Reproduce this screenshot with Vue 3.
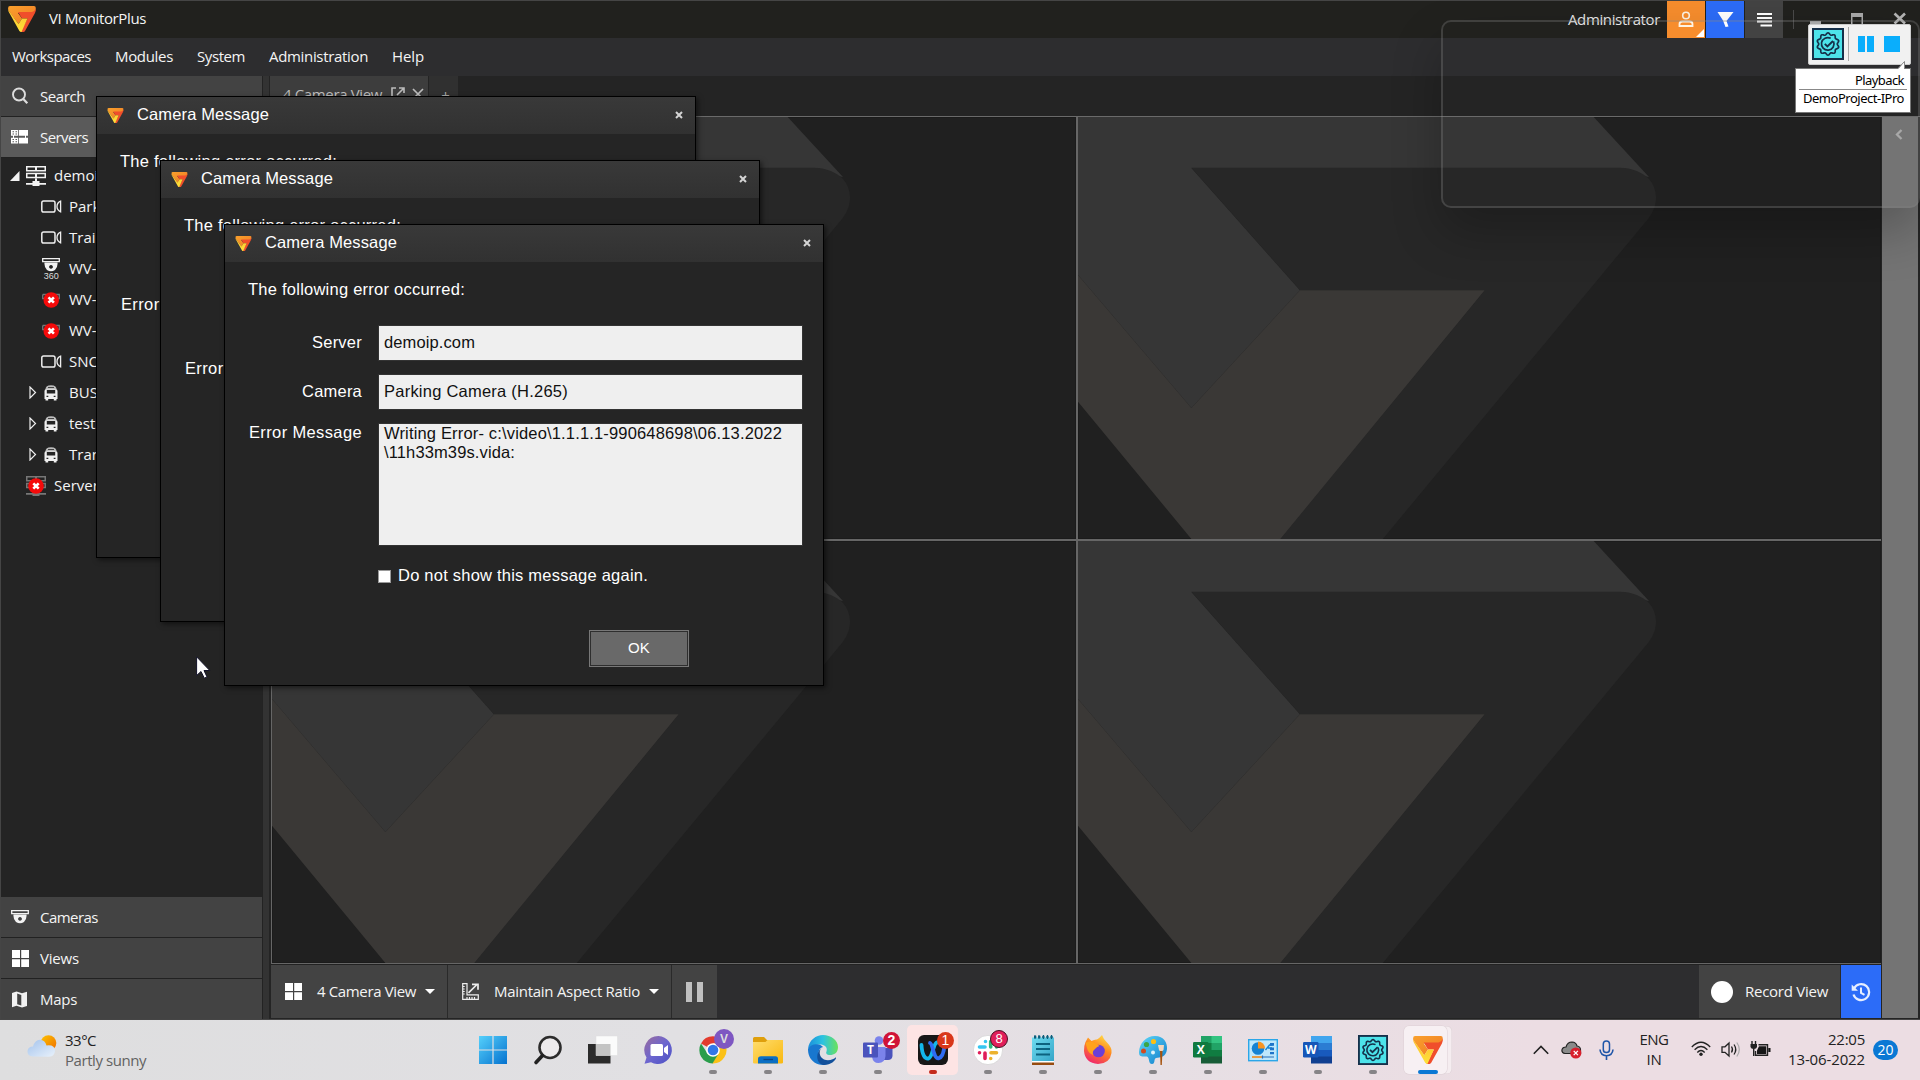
<script setup>
const menus = [
  ['Workspaces', 78],
  ['Modules', 57],
  ['System', 47],
  ['Administration', 98],
  ['Help', 31]
]

const tree = [
  { label: 'demoip', kind: 'server', level: 0, arrow: 'open' },
  { label: 'Parking', kind: 'cam', level: 1 },
  { label: 'Train', kind: 'cam', level: 1 },
  { label: 'WV-', kind: 'dome360', level: 1 },
  { label: 'WV-', kind: 'domeoff', level: 1 },
  { label: 'WV-', kind: 'domeoff', level: 1 },
  { label: 'SNC', kind: 'cam', level: 1 },
  { label: 'BUS', kind: 'bus', level: 1, arrow: 'closed' },
  { label: 'testb', kind: 'bus', level: 1, arrow: 'closed' },
  { label: 'Trans', kind: 'bus', level: 1, arrow: 'closed' },
  { label: 'Server', kind: 'serveroff', level: 0 }
]

const dialogs = [96, 160, 224]

// Spreads a label's letters so that it fills the given width.
const vFit = {
  mounted(el, binding) {
    const natural = el.getBoundingClientRect().width
    const n = el.textContent.trim().length
    el.style.letterSpacing = `${((binding.value + 1 - natural) / n).toFixed(3)}px`
  }
}

// Outline of the scalloped badge around the check mark.
const gear = (() => {
  const pts = []
  for (let i = 0; i < 120; i++) {
    const a = (i / 120) * Math.PI * 2
    const r = 10.2 + 0.95 * Math.cos(10 * a)
    pts.push(`${(16 + r * Math.sin(a)).toFixed(2)} ${(16 - r * Math.cos(a)).toFixed(2)}`)
  }
  return `M${pts.join('L')}Z`
})()
</script>

<template>
  <div class="screen">
    <svg class="defs" width="0" height="0">
      <defs>
        <linearGradient id="gOr" x1="0" y1="0" x2="1" y2="1"><stop offset="0" stop-color="#f9a12c" /><stop offset="1" stop-color="#f07a26" /></linearGradient>
        <linearGradient id="gYe" x1="0" y1="0" x2="0" y2="1"><stop offset="0" stop-color="#fdc02d" /><stop offset="1" stop-color="#fee23a" /></linearGradient>
        <linearGradient id="gWin" x1="0" y1="0" x2="1" y2="1"><stop offset="0" stop-color="#55d0fb" /><stop offset="1" stop-color="#0572cf" /></linearGradient>
        <linearGradient id="gChat" x1="0" y1="0" x2="1" y2="1"><stop offset="0" stop-color="#9a6b9c" /><stop offset=".5" stop-color="#6d66cf" /><stop offset="1" stop-color="#4b50c4" /></linearGradient>
        <linearGradient id="gFold" x1="0" y1="0" x2="1" y2="1"><stop offset="0" stop-color="#ffdd6e" /><stop offset="1" stop-color="#f9b80f" /></linearGradient>
        <linearGradient id="gEdge" x1="0" y1="0" x2="1" y2="0"><stop offset="0" stop-color="#1b8fdb" /><stop offset=".5" stop-color="#2cc3e0" /><stop offset="1" stop-color="#6be25a" /></linearGradient>
        <linearGradient id="gFox" x1=".8" y1="0" x2=".3" y2="1"><stop offset="0" stop-color="#ffe14a" /><stop offset=".45" stop-color="#ff8a1e" /><stop offset="1" stop-color="#f0246e" /></linearGradient>
        <linearGradient id="gNote" x1="0" y1="0" x2="1" y2="1"><stop offset="0" stop-color="#6fdcf0" /><stop offset="1" stop-color="#35a5c8" /></linearGradient>
        <linearGradient id="gPal" x1="0" y1="0" x2="1" y2="1"><stop offset="0" stop-color="#5ed8f8" /><stop offset="1" stop-color="#0f7ccb" /></linearGradient>
        <linearGradient id="gSun" x1="0" y1="0" x2="1" y2="1"><stop offset="0" stop-color="#fdc400" /><stop offset="1" stop-color="#ef6c00" /></linearGradient>
        <linearGradient id="gCloud" x1="0" y1="0" x2="1" y2="1"><stop offset="0" stop-color="#a4c3ec" /><stop offset="1" stop-color="#e8f1fb" /></linearGradient>
      </defs>
      <symbol id="logo" viewBox="0 0 28 26">
        <path fill="url(#gOr)" d="M2 0H26Q28.500 0 27.500 4L26 7H10L14 12.500 10.500 18 .3 4Q-.6 0 2 0Z" />
        <path fill="#f04e2b" d="M10 6H24Q27 5 27.800 2.500 28 5 27 7L17 25Q16.400 26 15.500 26H12.500L19.500 12.500H14Z" />
        <path fill="url(#gYe)" d="M.2 3.500L10.500 18 14 12.500H19.500L13.500 26Q12 26 11.400 25L.5 5.500Z" />
      </symbol>
      <symbol id="cell" viewBox="0 0 803 422">
        <path fill="#363636" d="M0 0H515.700L571 60 545 55 113.400 51 222 173.300 113.400 291 0 158Z" />
        <path fill="#272727" d="M113.400 50.700H542C556 51 565 56 571 62 580 72 581 88 570 102L304.800 422H202L406.700 173.300H222Z" />
        <path fill="#3a3836" d="M0 158L113.400 291 222 173.300H406.700L202.300 422H113.400L0 284.700Z" />
      </symbol>
      <symbol id="badge" viewBox="0 0 32 32">
        <rect x="1" y="1" width="30" height="30" fill="#4de3ea" stroke="#15304a" stroke-width="2" />
        <path :d="gear" fill="none" stroke="#15304a" stroke-width="1.700" />
        <path d="M21.500 13.300A6.300 6.300 0 1 1 18.700 10.300" fill="none" stroke="#15304a" stroke-width="1.700" />
        <path d="M12.800 15.800l2.600 2.600 5.600-5.400" fill="none" stroke="#15304a" stroke-width="1.900" />
      </symbol>
      <symbol id="dome" viewBox="0 0 18 14">
        <path fill="none" stroke="#f2f2f2" stroke-width="1.300" d="M.7.700H17.300V3.600H.7Z" />
        <path fill="#f2f2f2" fill-rule="evenodd" d="M2.500 4.500H15.500A6.500 8 0 0 1 13 12Q9 14.600 5 12A6.500 8 0 0 1 2.500 4.500ZM9 7a1.900 1.900 0 1 0 .01 0Z" />
      </symbol>
      <symbol id="red" viewBox="0 0 16 16">
        <circle cx="8" cy="8" r="7.800" fill="#f50a0a" />
        <path d="M5.300 5.300l5.400 5.400M10.700 5.300l-5.400 5.400" stroke="#fff" stroke-width="2.600" />
      </symbol>
      <symbol id="four" viewBox="0 0 17 17">
        <path fill="#fff" d="M0 0H8V8H0ZM9.200 0H17V8H9.200ZM0 9.200H8V17H0ZM9.200 9.200H17V17H9.200Z" />
      </symbol>
    </svg>

    <div class="window">
      <header class="titlebar">
        <svg class="app-logo" width="28" height="26"><use href="#logo" /></svg>
        <span v-fit="96" class="app-name">VI MonitorPlus</span>
        <div class="title-right">
          <span v-fit="91" class="admin">Administrator</span>
          <div class="tbtn orange">
            <svg width="38" height="37" viewBox="0 0 38 37"><circle cx="19" cy="14.500" r="3.300" fill="none" stroke="#fff3e3" stroke-width="1.600" /><path d="M12.500 25v-2q0-2.500 3-2.500h7q3 0 3 2.500v2Z" fill="none" stroke="#fff3e3" stroke-width="1.800" /><path d="M37 28v8h-8Z" fill="#fff" /></svg>
          </div>
          <div class="tbtn blue">
            <svg width="38" height="37" viewBox="0 0 38 37"><path fill="#fff" d="M11.500 11H27.500L20.500 20 22.500 25.500 19.500 26 17 19.500Z" /></svg>
          </div>
          <div class="tbtn gray">
            <svg width="38" height="37" viewBox="0 0 38 37"><path stroke="#fff" stroke-width="1.800" d="M12 13h15M12 17h15M12 20.500h15M15.500 24.500h11.500" /></svg>
          </div>
          <i class="vline"></i>
          <svg class="wctl" width="100" height="37" viewBox="0 0 100 37">
            <path fill="#a9a9a9" d="M0 20h11v4H0ZM41 12h12v13h-12ZM42.500 16v8h9v-8Z" fill-rule="evenodd" />
            <path d="M84.500 12.500l10.500 10M95 12.500l-10.500 10" stroke="#b4b4b4" stroke-width="2.600" />
          </svg>
        </div>
      </header>

      <nav class="menubar">
        <span v-for="m in menus" :key="m[0]" v-fit="m[1]">{{ m[0] }}</span>
      </nav>

      <div class="body">
        <aside class="sidebar">
          <div class="side-row">
            <svg width="18" height="18" viewBox="0 0 18 18"><circle cx="8" cy="7.500" r="6" fill="none" stroke="#ddd" stroke-width="1.900" /><path d="M12.300 12l4 4.200" stroke="#ddd" stroke-width="2.200" /></svg>
            <span v-fit="44">Search</span>
          </div>
          <div class="side-row active">
            <svg width="18" height="14" viewBox="0 0 18 14"><path fill="#fff" fill-rule="evenodd" d="M0 0H17V5.700H0ZM1.500 1.300v1h1.500v-1ZM4.500 1.300v1H6v-1ZM1.500 3.500v1h1.500v-1ZM4.500 3.500v1H6v-1ZM0 7.800H17V13.500H0ZM1.500 9v1h1.500V9ZM4.500 9v1H6V9ZM1.500 11.300v1h1.500v-1ZM4.500 11.300v1H6v-1Z" /><path d="M2.500 5v3M14.500 5v3" stroke="#fff" /><path d="M7.500 0v14" stroke="#5a5a5a" stroke-width=".8" /></svg>
            <span v-fit="47">Servers</span>
          </div>
          <ul class="tree">
            <li v-for="(n, i) in tree" :key="i" :class="['lvl' + n.level]">
              <span class="arrow">
                <svg v-if="n.arrow === 'open'" width="10" height="10" viewBox="0 0 10 10"><path fill="#f2f2f2" d="M9.500 0V10H0Z" /></svg>
                <svg v-else-if="n.arrow" width="8" height="13" viewBox="0 0 8 13"><path fill="none" stroke="#eee" stroke-width="1.200" d="M1 1V12L6.500 6.500Z" /></svg>
              </span>
              <span class="ico">
                <svg v-if="n.kind === 'server' || n.kind === 'serveroff'" width="20" height="20" viewBox="0 0 20 20">
                  <g :fill="n.kind === 'server' ? '#f2f2f2' : '#777'" fill-rule="evenodd"><path d="M0 0H20V5.500H0ZM1.500 1.500V4H9V1.500ZM11 1.500V4H18.500V1.500ZM0 6.800H20V12.300H0ZM1.500 8.300V10.800H9V8.300ZM11 8.300V10.800H18.500V8.300ZM9 12h2v3h2.500v2H20v1.800H13.500V20H6.500V18.800H0V17H6.500V15H9Z" /></g>
                  <use v-if="n.kind === 'serveroff'" href="#red" x="2" y="2" width="16" height="16" />
                </svg>
                <svg v-else-if="n.kind === 'cam'" width="21" height="13" viewBox="0 0 21 13"><rect x=".8" y="1" width="13.200" height="11" rx="1.800" fill="none" stroke="#eee" stroke-width="1.500" /><path d="M19.600 1.200v10.600q-3.600-1.600-3.600-5.300t3.600-5.300Z" fill="none" stroke="#eee" stroke-width="1.300" /></svg>
                <svg v-else-if="n.kind === 'dome360'" width="20" height="22" viewBox="0 0 20 22"><use href="#dome" x="1" y="0" width="18" height="14" /><text x="10.300" y="21.200" text-anchor="middle" class="deg">360</text></svg>
                <svg v-else-if="n.kind === 'domeoff'" width="20" height="18" viewBox="0 0 20 18"><path d="M1.700 3.500h16.600v4h-2M1.700 3.500v4h2" stroke="#777" fill="none" stroke-width="1.300" /><use href="#red" x="2.200" y="1" width="16" height="16" /></svg>
                <svg v-else width="14" height="16" viewBox="0 0 14 16"><path fill="#bdbdbd" d="M1.500 5Q1 .2 7 .2T12.500 5Z" /><path fill="#f0f0f0" fill-rule="evenodd" d="M1 4.500H13L13.500 6V14H12.500V15.500H9.800V14H4.200V15.500H1.500V14H.5V6ZM2.800 5V8.500H11.200V5ZM2.500 10.800V12H4.300V10.800ZM9.700 10.800V12H11.500V10.800Z" /><path d="M4 2.500h6" stroke="#444" stroke-width="1" /></svg>
              </span>
              <span class="lbl">{{ n.label }}</span>
            </li>
          </ul>
          <div class="side-row"><svg width="18" height="14"><use href="#dome" /></svg><span v-fit="57">Cameras</span></div>
          <div class="side-row"><svg width="17" height="17" class="sm"><use href="#four" /></svg><span v-fit="38">Views</span></div>
          <div class="side-row last"><svg width="17" height="17" viewBox="0 0 17 17"><path fill="#f2f2f2" fill-rule="evenodd" d="M1 2L5.500 .5 11 2.200 16 .7V15L11 16.500 5.500 14.700 1 16.200ZM6.200 2.600V13.200L10.300 14.500V4Z" /></svg><span v-fit="36">Maps</span></div>
        </aside>

        <main class="main">
          <div class="tabs">
            <div class="tab">
              <span v-fit="98">4 Camera View</span>
              <svg width="14" height="14" viewBox="0 0 14 14"><path fill="none" stroke="#bbb" stroke-width="1.600" d="M5 1H1V13H13V9M8 1H13V6M13 1L6 8" /></svg>
              <svg width="12" height="12" viewBox="0 0 12 12"><path stroke="#bbb" stroke-width="1.700" d="M1 1l10 10M11 1L1 11" /></svg>
            </div>
            <div class="newtab">+</div>
          </div>
          <div class="stage">
            <div class="view">
              <div class="grid">
                <div v-for="c in 4" :key="c" class="cell"><svg width="803" height="422"><use href="#cell" /></svg></div>
              </div>
              <footer class="toolbar">
                <div class="tool t1"><svg width="17" height="17"><use href="#four" /></svg><span v-fit="98">4 Camera View</span><i class="caret"></i></div>
                <div class="tool t2">
                  <svg width="17" height="17" viewBox="0 0 17 17"><path fill="none" stroke="#eee" stroke-width="1.200" d="M.7.700H5V11.800H16.300V16.300H.7ZM.7 3.500h2M.7 6h2M.7 8.500h2M.7 11h2M5 16v-2M7.500 16v-2M10 16v-2M12.500 16v-2" /><path d="M6.500 9.800L14.500 2M10 1.300h6v5.500" fill="none" stroke="#eee" stroke-width="1.700" /></svg>
                  <span v-fit="145">Maintain Aspect Ratio</span><i class="caret"></i>
                </div>
                <div class="tool t3"><i></i><i></i></div>
                <div class="spacer"></div>
                <div class="tool rec"><i></i><span v-fit="82">Record View</span></div>
                <div class="hist">
                  <svg width="20" height="20" viewBox="0 0 20 20"><path d="M3 6.500A8 8 0 1 1 2.500 12.500" fill="none" stroke="#e6eeff" stroke-width="2.200" /><path d="M.7 2.500V8.800H7Z" fill="#e6eeff" /><path d="M10 5.500V11l3.500 1.800" fill="none" stroke="#e6eeff" stroke-width="2" /></svg>
                </div>
              </footer>
            </div>
            <div class="rail"><svg width="8" height="11" viewBox="0 0 8 11"><path d="M6.500 1L2 5.500 6.500 10" fill="none" stroke="#a8a8a8" stroke-width="2.300" /></svg></div>
          </div>
        </main>
      </div>
    </div>

    <footer class="taskbar">
      <div class="weather">
        <svg width="30" height="23" viewBox="0 0 30 23"><circle cx="21.500" cy="8" r="7.800" fill="url(#gSun)" /><path d="M6 21.500Q0 21 .5 16 1 11.500 6 11.500 8 5 13 4.800 18 5 19.500 10.500 28 9.500 28 16 27.500 21.500 22 21.700Z" fill="url(#gCloud)" /></svg>
        <div><div><span v-fit="30">33°C</span></div><div class="dim"><span v-fit="80">Partly sunny</span></div></div>
      </div>
      <div class="tasks">
        <div class="task"><svg viewBox="0 0 30 30"><path fill="url(#gWin)" d="M1 1H14.400V14.400H1ZM15.600 1H29V14.400H15.600ZM1 15.600H14.400V29H1ZM15.600 15.600H29V29H15.600Z" /></svg></div>
        <div class="task"><svg viewBox="0 0 30 30"><circle cx="17" cy="12.500" r="10.500" fill="#eceaec" stroke="#2c2c2c" stroke-width="2.600" /><path d="M9.500 20.500L3 27.500" stroke="#222" stroke-width="3.600" stroke-linecap="round" /></svg></div>
        <div class="task"><svg viewBox="0 0 30 30"><path fill="#2b2b2b" d="M0 9H22.500V28.500H0Z" /><path fill="#fbfbfb" stroke="#ddd" stroke-width=".5" d="M8 1H29.500V20.500H8Z" /><path fill="#c4c4c4" d="M8 9H22.500V20.500H8Z" /></svg></div>
        <div class="task"><svg viewBox="0 0 30 30"><path fill="url(#gChat)" d="M15.500 1A14 14 0 1 1 8 27.200L1.500 28.800 3.500 22.500A14 14 0 0 1 15.500 1Z" /><rect x="7.500" y="9" width="12.500" height="12" rx="1.500" fill="#fff" /><path fill="#fff" d="M21 13l4-3v10l-4-3Z" /></svg></div>
        <div class="task">
          <svg viewBox="0 0 30 30"><path fill="#e33b2e" d="M15 15L3 8.500A13.500 13.500 0 0 1 26.800 8.500H15Z" /><path fill="#fbc116" d="M26.800 8.500A13.500 13.500 0 0 1 14 28.500L20.500 18 15 8.500Z" /><path fill="#2a9d4b" d="M3 8.500L9.500 18.500 15 21 20 19.500 14.500 28.500A13.500 13.500 0 0 1 3 8.500Z" /><circle cx="15" cy="15" r="6.800" fill="#fff" /><circle cx="15" cy="15" r="5.300" fill="#3277e8" /></svg>
          <b class="bdg purple">V</b><i class="dot"></i>
        </div>
        <div class="task"><svg viewBox="0 0 30 30"><path fill="#df9f0c" d="M0 3.500Q0 2 1.500 2H11L14 5H28.500Q30 5 30 7V12H0Z" /><path fill="url(#gFold)" d="M0 7H12.500L14.500 5H30V27.500Q30 28.500 28.500 28.500H1.500Q0 28.500 0 27.500Z" /><path fill="#0b6fc4" d="M5 28.500V24Q5 21.200 8 21.200H22.500Q25 21.200 25 24V28.500Z" /><path stroke="#0c4483" stroke-width="1.300" d="M10.500 24.500h9.500" /></svg><i class="dot"></i></div>
        <div class="task"><svg viewBox="0 0 30 30"><path fill="url(#gEdge)" d="M0 14C1 5 8 0 15 0 23 0 30 5 30 12 30 18 26 20 22 20 19 20 17.500 18.500 18.500 16.500 20 12 16 9.500 12 9.500 6 9.500 2 12 0 14Z" /><path fill="#1877cf" d="M0 14C2 9.500 7 8.500 11 9.500 14 10.500 15 12 15 12 11 13 10 17 11 21 12.500 27 20 28 24 26 21 30 12 31.500 6.500 27.500 1.500 24 0 19 0 14Z" /><path fill="#12509b" d="M15 12C10 15 11 22 16 24.500 21 26.500 26 24 27.500 22.500 28.500 22 28 24 27 25 24 29 19 30 15 30 8 28 7 17 15 12Z" /></svg><i class="dot"></i></div>
        <div class="task">
          <svg viewBox="0 0 30 30"><circle cx="24.500" cy="9" r="3" fill="#5059c9" /><path fill="#4b53bc" d="M19 13H29.500V21Q29 25 25 25H20Z" /><circle cx="16" cy="5.500" r="4.300" fill="#7b83eb" /><path fill="#7b83eb" d="M9 12H22.500V21Q22 28 15.500 28 10 28 9 22Z" /><rect y="7.500" width="15" height="15" rx="1" fill="#4b53bc" /><text x="7.500" y="19" text-anchor="middle" class="ic">T</text></svg>
          <b class="bdg crim">2</b><i class="dot"></i>
        </div>
        <div class="task alert">
          <svg viewBox="0 0 30 30"><rect width="30" height="30" rx="6" fill="#171717" /><path d="M3.500 10C4 20 7 24 10.500 23.500 15 22 15 8 19 7.500" fill="none" stroke="#13b7ea" stroke-width="3.800" stroke-linecap="round" /><path d="M12 8C15 9 15.500 24 20.500 23.300 24 22.500 26 17 26.500 10" fill="none" stroke="#2f6bf2" stroke-width="3.800" stroke-linecap="round" /></svg>
          <b class="bdg oran">1</b><i class="dot red"></i>
        </div>
        <div class="task">
          <svg viewBox="0 0 30 30"><circle cx="15" cy="15" r="14.600" fill="#fff" stroke="#ccc" stroke-width=".6" /><g stroke-width="3.600" stroke-linecap="round"><path stroke="#36c5f0" d="M6.500 12h5.500M12.500 6.500v.01" /><path stroke="#2eb67d" d="M17.700 6.500v5.500M23.500 12h.01" /><path stroke="#ecb22e" d="M18 17.700h5.500M17.700 23.500v.01" /><path stroke="#e01e5a" d="M12 18v5.500M6.500 17.700h.01" /></g></svg>
          <b class="bdg slack">8</b><i class="dot"></i>
        </div>
        <div class="task"><svg viewBox="0 0 30 30"><path fill="url(#gNote)" d="M4 2.500H26V26H4Z" /><path fill="#fff" d="M4 26H26V28H4Z" /><path fill="#964b10" d="M4 27.500H26V30H4Z" /><path stroke="#0c627f" stroke-width="1.800" d="M8 9h14M8 14h14M8 19.500h14" /><path stroke="#0c5f7c" stroke-width="2.300" stroke-dasharray="2.300 1.800" d="M6 2h19" /><path stroke="#0c5f7c" stroke-width="1" d="M7 0v4M11 0v4M15.500 0v4M19.500 0v4M23.500 0v4" /></svg><i class="dot"></i></div>
        <div class="task"><svg viewBox="0 0 30 30"><path fill="url(#gFox)" d="M2.500 7L5 2.500 8.500 6Q12 4 14 4.500 16.500 3 19 0 20.500 4.500 24 7.500 29.500 13 28.500 18 27 28.500 15 29 2 28 1 16 .8 11 2.500 7Z" /><circle cx="15.500" cy="16" r="6.300" fill="#6b3fd6" /><path fill="#ffa21c" d="M2.500 8Q8 5 13 8.500L16.500 11Q14 11.500 12 14 9 16 10 20 5 18 4 13Z" /></svg><i class="dot"></i></div>
        <div class="task"><svg viewBox="0 0 30 30"><path fill="url(#gPal)" d="M17 1C26 1 29.500 8 29 14 28 23 22 22 18 23 15.500 24 17.500 29 14 29 10 29 12 23 9 21.500 5 21 1 23 1 17 1.500 8 8 1 17 1Z" /><circle cx="15.500" cy="6.500" r="2.600" fill="#fbbf14" /><circle cx="8.500" cy="9.500" r="2.600" fill="#3aa547" /><circle cx="5.500" cy="16" r="2.500" fill="#d14a1f" /><circle cx="15" cy="17.500" r="2" fill="#dff4fb" /><path fill="#f3d7bd" d="M20 10H26L25.500 15Q23 18 21 15Z" /><path fill="#a6540f" d="M22 16h2.500L23.800 30H22.500Z" /></svg><i class="dot"></i></div>
        <div class="task"><svg viewBox="0 0 30 30"><path fill="#21a366" d="M8 1H29V10H8Z" /><path fill="#33c481" d="M18.500 1H29V8H18.500Z" /><path fill="#107c41" d="M8 8H29V22H8Z" /><path fill="#21a366" d="M18.500 8H29V15H18.500Z" /><path fill="#185c37" d="M8 21.500H29V28.500H8Z" /><rect y="7" width="15.500" height="15.500" rx="1.200" fill="#0f7a3f" /><text x="7.700" y="19" text-anchor="middle" class="ic">X</text></svg><i class="dot"></i></div>
        <div class="task"><svg viewBox="0 0 30 30"><rect x=".7" y="4.700" width="28.600" height="21" fill="#bfe8fb" stroke="#2ba6e8" stroke-width="1.400" /><circle cx="10" cy="13.500" r="6.300" fill="#1683d3" /><path fill="#f79421" d="M10 6.500V13.500H17A7 7 0 0 0 10 6.500Z" /><path fill="none" stroke="#1683d3" stroke-width="1.300" d="M17.500 15l4-5h3M20 13h4" /><path fill="#1e74c9" d="M22 8h4v2.800h-4ZM22 12.500h4v2.800h-4ZM22 17h4v2.300h-4Z" /><path stroke="#f08a1c" stroke-width="1.600" d="M4 22h10" /><path stroke="#2b6fb8" stroke-width="1.200" d="M14 22h12M14.500 20.500v3" /></svg><i class="dot"></i></div>
        <div class="task"><svg viewBox="0 0 30 30"><path fill="#41a5ee" d="M8 1H29V8H8Z" /><path fill="#2b7cd3" d="M8 8H29V15H8Z" /><path fill="#185abd" d="M8 15H29V22H8Z" /><path fill="#103f91" d="M8 21.500H29V28.500H8Z" /><rect y="7" width="15.500" height="15.500" rx="1.200" fill="#1656b8" /><text x="7.700" y="19" text-anchor="middle" class="ic">W</text></svg><i class="dot"></i></div>
        <div class="task"><svg><use href="#badge" /></svg><i class="dot"></i></div>
        <div class="task current"><svg><use href="#logo" /></svg><i class="dot"></i></div>
      </div>
      <div class="tray">
        <svg class="chev" width="16" height="10" viewBox="0 0 16 10"><path d="M.8 8.800L8 1.500l7.200 7.300" fill="none" stroke="#222" stroke-width="1.600" /></svg>
        <svg class="cloud" width="22" height="18" viewBox="0 0 22 18"><path d="M4 12.500Q.7 12 .9 9 1.500 6 5 6 6.500 1 11 1 15 1.200 16 5 19.500 5.500 19.500 9V12.500Z" fill="#8a8a8a" stroke="#222" stroke-width="1.200" /><circle cx="14.800" cy="12" r="5.600" fill="#d81f2c" /><path d="M12.700 9.900l4.200 4.200M16.900 9.900l-4.200 4.200" stroke="#fff" stroke-width="1.300" /></svg>
        <svg class="mic" width="15" height="21" viewBox="0 0 15 21"><rect x="4.300" y="1" width="6.200" height="11.500" rx="3.100" fill="none" stroke="#1f55a8" stroke-width="1.500" /><path d="M1 9.500Q1.500 15.500 7.500 15.700 13.500 15.500 14 9.500M7.500 16v4" fill="none" stroke="#1f55a8" stroke-width="1.600" /></svg>
        <div class="lang"><div><span v-fit="28">ENG</span></div><div><span v-fit="14">IN</span></div></div>
        <svg class="wifi" width="20" height="16" viewBox="0 0 20 16"><g fill="none" stroke="#222" stroke-width="1.300"><path d="M.8 6Q10-3.500 19.200 6" /><path d="M3.600 8.800Q10 2.200 16.400 8.800" /><path d="M6.300 11.500Q10 7.500 13.700 11.500" /></g><circle cx="10" cy="13.200" r="1.700" fill="#222" /></svg>
        <svg class="spk" width="20" height="17" viewBox="0 0 20 17"><path d="M1 5.800H4L8 2V15L4 11.300H1Z" fill="none" stroke="#222" stroke-width="1.300" /><path d="M10.500 5.500q2 3 0 6M13 3.500q3.500 5 0 10" fill="none" stroke="#222" stroke-width="1.300" /><path d="M15.800 1.500q5 7 0 14" fill="none" stroke="#aaa" stroke-width="1.200" /></svg>
        <svg class="bat" width="21" height="16" viewBox="0 0 21 16"><path d="M2 0v4M5.500 0v4M3.700 7v8" stroke="#222" stroke-width="1.400" /><path d="M.5 3H7V6Q6.500 8 3.700 8 1 8 .5 6Z" fill="#222" /><path d="M8.500 3.800H17.500V14.200H5.500V10" fill="none" stroke="#222" stroke-width="1.400" /><path d="M7 9.500L9 5.300H16.200V12.900H7ZM18.300 7H20.500V11H18.300Z" fill="#161616" /></svg>
        <div class="clock"><div><span v-fit="36">22:05</span></div><div><span v-fit="76">13-06-2022</span></div></div>
        <div class="count">20</div>
      </div>
    </footer>

    <section v-for="p in dialogs" :key="p" class="dialog" :style="{ left: p + 'px', top: p + 'px' }">
      <header class="dlg-head">
        <svg width="17" height="15"><use href="#logo" /></svg>
        <span v-fit="131">Camera Message</span>
        <svg class="x" width="8" height="8" viewBox="0 0 8 8"><path d="M1 1l6 6M7 1L1 7" stroke="#d4d4d4" stroke-width="2" /></svg>
      </header>
      <div class="intro"><span v-fit="216">The following error occurred:</span></div>
      <div class="field"><label><span v-fit="49">Server</span></label><div class="input"><span v-fit="90">demoip.com</span></div></div>
      <div class="field"><label><span v-fit="59">Camera</span></label><div class="input"><span v-fit="183">Parking Camera (H.265)</span></div></div>
      <div class="field area"><label><span v-fit="112">Error Message</span></label><div class="input"><div><span v-fit="397">Writing Error- c:\video\1.1.1.1-990648698\06.13.2022</span></div><div><span v-fit="130">\11h33m39s.vida:</span></div></div></div>
      <div class="again"><i></i><span v-fit="249">Do not show this message again.</span></div>
      <button class="ok"><span v-fit="21">OK</span></button>
    </section>

    <div class="ghost"></div>
    <div class="recorder">
      <svg width="32" height="32"><use href="#badge" /></svg>
      <i class="sep"></i><i class="p"></i><i class="p"></i><i class="s"></i>
    </div>
    <div class="tip">
      <div><span v-fit="48">Playback</span></div>
      <hr />
      <div><span v-fit="100">DemoProject-IPro</span></div>
      <svg width="8" height="8" viewBox="0 0 8 8"><path d="M0 8L7 0V8Z" fill="#fff" /><path d="M0 7.500L6.500 .5V8" fill="none" stroke="#888" /></svg>
    </div>
    <svg class="cursor" width="15" height="23" viewBox="0 0 15 23"><path d="M.6.800V19.500L5 15.500 8.300 22.200 11 20.900 8 14.500H13.800Z" fill="#fff" stroke="#14142a" stroke-width="1" /></svg>
  </div>
</template>

<style>
html, body { background: #242424; overflow: hidden; }
</style>

<style scoped>
* { box-sizing: border-box; }
.screen { position: relative; width: 1920px; height: 1080px; overflow: hidden; display: flex; flex-direction: column; font: 15px/20px "Open Sans", "Noto Sans", sans-serif; color: #f4f4f4; }
.screen span { display: inline-block; white-space: nowrap; }
.screen svg { display: block; flex: none; }
.screen .defs { position: absolute; }
.window { height: 1020px; display: flex; flex-direction: column; border: 1px solid #454545; border-right: 0; background: #242424; }
.titlebar { height: 37px; flex: none; display: flex; background: #21211e; }
.app-logo { margin: 5px 0 0 7px; }
.app-name { margin: 4px 0 0 13px; line-height: 26px; height: 26px; }
.title-right { margin-left: auto; display: flex; }
.admin { line-height: 37px; margin-right: 7px; color: #e6e6e6; }
.tbtn { width: 38px; height: 37px; margin-right: 1px; }
.orange { background: #f78d2d; }
.blue { background: #2c6cf8; }
.gray { background: #434343; }
.vline { width: 1px; height: 19px; background: #4a4a4a; margin: 9px 16px 0 9px; }
.wctl { margin-right: 10px; }
.menubar { height: 38px; flex: none; background: #2d2d2f; display: flex; gap: 24px; padding-left: 11px; line-height: 36px; }
.body { flex: 1; display: flex; min-height: 0; }
.sidebar { width: 262px; display: flex; flex-direction: column; border-right: 1px solid #232323; flex: none; }
.side-row { height: 41px; flex: none; background: #434343; border-bottom: 1px solid #222; display: grid; grid-template-columns: 39px auto; justify-content: start; align-items: center; }
.side-row svg { margin-left: 10px; }
.side-row span { line-height: 38px; padding-bottom: 1px; }
.side-row.active { background: #5a5a5a; }
.side-row .sm { width: 17px; margin-left: 11px; }
.side-row.last { height: 40px; border-bottom: 0; }
.tree { list-style: none; margin: 0; padding: 2px 0 0; flex: 1; }
.tree li { height: 31px; line-height: 31px; display: flex; align-items: center; }
.tree .arrow { width: 10px; margin-left: 9px; height: 31px; display: flex; align-items: center; }
.tree .lvl1 .arrow { margin-left: 28px; width: 8px; }
.tree .ico { width: 28px; height: 31px; display: flex; align-items: center; justify-content: center; }
.tree .lvl0 .ico { width: 32px; }
.lvl0 .lbl { margin-left: 2px; }
.lvl1 .lbl { margin-left: 4px; }
.deg { font: 9px "Liberation Sans", sans-serif; fill: #ddd; }
.main { flex: 1; display: flex; flex-direction: column; padding-left: 7px; background: linear-gradient(90deg, #333 0 6px, #242424 6px); min-width: 0; }
.tabs { height: 40px; display: flex; flex: none; }
.tab { width: 158px; background: #3d3d3d; display: flex; align-items: center; padding: 0 0 4px 13px; color: #bdbdbd; line-height: 36px; margin-right: 1px; }
.tab svg { margin-left: 9px; }
.tab svg + svg { margin-left: 7px; }
.newtab { width: 29px; background: #303030; text-align: center; line-height: 38px; padding-left: 4px; color: #aaa; }
.stage { flex: 1; display: flex; border-top: 1px solid #6a6a6a; padding-left: 1px; min-height: 0; }
.view { width: 1610px; display: flex; flex-direction: column; flex: none; }
.grid { height: 847px; display: grid; grid-template-columns: 804px 803px; grid-template-rows: 422px 422px; gap: 2px; background: #666; padding: 0 0 1px 1px; flex: none; }
.cell { background: #202020; box-shadow: inset 0 0 0 1px #1b1b1b; overflow: hidden; }
.toolbar { height: 54px; display: flex; background: #2d2d2f; border-top: 1px solid #222; flex: none; }
.tool { background: #434343; display: flex; align-items: center; border-right: 1px solid #2a2a2a; line-height: 50px; }
.tool span { padding-bottom: 1px; }
.t1 { width: 177px; padding-left: 14px; }
.t1 span, .t2 span { margin-left: 15px; }
.caret { border: 5px solid transparent; border-top-color: #fff; border-bottom: 0; margin-left: 9px; }
.t2 { width: 224px; padding-left: 14px; }
.t3 { width: 45px; padding-left: 14px; gap: 5px; border: 0; }
.t3 i { width: 6px; height: 20px; background: #c0c0c0; }
.spacer { flex: 1; }
.rec { width: 142px; padding-left: 12px; gap: 12px; }
.rec i { width: 22px; height: 22px; border-radius: 50%; background: #fff; }
.hist { width: 40px; background: #2c6cf8; display: flex; align-items: center; justify-content: center; }
.rail { width: 36px; height: 901px; background: #747474; margin-left: 1px; }
.rail svg { margin: 12px 0 0 13px; }

.taskbar { height: 60px; display: flex; position: relative; background: linear-gradient(90deg, #dededf 0, #e1e0e3 35%, #e6dfe4 60%, #ecdde3 80%, #ecdde3 100%); color: #222; }
.weather { display: flex; width: 465px; padding: 10px 0 0 27px; flex: none; }
.weather > svg { margin: 5px 8px 0 0; }
.dim { color: #626262; }
.tasks { display: flex; width: 990px; flex: none; }
.task { width: 55px; height: 60px; position: relative; display: flex; align-items: center; justify-content: center; }
.task > svg { width: 30px; height: 30px; overflow: visible; position: relative; }
.task.alert::before, .task.current::before { content: ""; position: absolute; left: 2px; top: 5px; width: 51px; height: 50px; border-radius: 5px; background: #fde4e4; }
.task.current::before { left: 4px; top: 6px; width: 43px; height: 48px; background: #f7f0f3; box-shadow: 0 0 0 .5px #ddd0d6, 5px 0 0 -.5px #f5edf0, 5px 0 0 0 #ddd0d6; }
.dot { position: absolute; left: 24px; top: 50px; width: 8px; height: 4px; border-radius: 2px; background: #868487; }
.dot.red { background: #c42b1c; }
.current .dot { width: 20px; left: 18px; background: #0a78d4; }
.ic { font: bold 12px "Open Sans", sans-serif; fill: #fff; }
.bdg { position: absolute; font: 12px/18px "Liberation Sans", sans-serif; width: 18px; height: 18px; border-radius: 50%; text-align: center; color: #fff; left: 29px; top: 10px; }
.purple { background: #7e57c2; width: 20px; height: 20px; line-height: 20px; top: 9px; left: 29px; color: #ddd; font-weight: bold; }
.crim { background: #d01337; width: 17px; height: 17px; line-height: 17px; top: 12px; left: 33px; font-size: 14px; font-weight: bold; }
.oran { background: #d9371a; width: 17px; height: 17px; line-height: 17px; top: 12px; left: 32px; font-size: 14px; }
.slack { background: #e01e5a; border: 1px solid #4a1025; line-height: 16px; left: 30px; font-size: 13px; }
.tray { display: flex; margin-left: 78px; align-items: flex-start; line-height: 20px; }
.chev { margin-top: 25px; }
.cloud { margin: 21px 0 0 12px; }
.mic { margin: 20px 0 0 16px; }
.lang { margin: 9px 0 0 25px; text-align: center; width: 30px; }
.wifi { margin: 21px 0 0 22px; }
.spk { margin: 21px 0 0 10px; }
.bat { margin: 21px 0 0 9px; }
.clock { margin: 9px 0 0 14px; width: 80px; text-align: right; }
.count { margin: 20px 0 0 8px; width: 25px; height: 20px; border-radius: 10px; background: #0a78d4; color: #fff; font-size: 14px; text-align: center; }

.dialog { position: absolute; width: 600px; height: 462px; background: #252525; border: 1px solid #000; box-shadow: 2px 2px 5px rgba(0, 0, 0, .5); font: 16.5px/19px "Liberation Sans", Arial, sans-serif; color: #fff; display: flex; flex-direction: column; }
.dlg-head { height: 37px; flex: none; display: flex; align-items: flex-start; background: linear-gradient(#393939, #313131); }
.dlg-head svg { margin: 11px 0 0 10px; }
.dlg-head span { margin: 8px 0 0 13px; }
.dlg-head .x { margin: 14px 12px 0 auto; }
.intro { padding: 18px 0 0 23px; height: 63px; flex: none; }
.field { display: flex; height: 36px; margin-bottom: 13px; flex: none; }
.field label { width: 137px; text-align: right; padding-top: 8px; }
.input { margin-left: 16px; width: 425px; background: #efefef; border: 1px solid #333; color: #111; padding: 7px 0 0 5px; }
.field.area { height: 123px; margin-bottom: 23px; }
.area label { padding-top: 0; }
.area .input { padding-top: 0; }
.again { display: flex; height: 61px; padding-left: 153px; flex: none; }
.again i { width: 13px; height: 13px; background: #fff; border: 1px solid #999; margin: 1px 7px 0 0; }
.again span { margin-top: -3px; height: 19px; }
.ok { margin: 0 0 0 364px; width: 100px; height: 37px; flex: none; border: 1px solid #787878; box-shadow: inset 0 0 0 1px #2e2e2e; background: #696969; color: #fff; font: 15px/19px "Liberation Sans", Arial, sans-serif; padding: 0 0 3px; }

.ghost { position: absolute; left: 1441px; top: 20px; width: 479px; height: 188px; border: 2px solid rgba(130, 130, 130, .32); border-radius: 10px; box-shadow: 0 24px 50px rgba(0, 0, 0, .24); }
.recorder { position: absolute; left: 1808px; top: 24px; width: 103px; height: 41px; background: #f1f1f1; border: 1px solid #ccc; border-radius: 2px; display: flex; padding: 3px; align-items: flex-start; }
.recorder .sep { width: 1px; height: 34px; background: #aaa; margin: -1px 9px 0 4px; }
.recorder .p { width: 7px; height: 16px; background: #0aaefc; margin: 8px 2px 0 0; }
.recorder .s { width: 16px; height: 16px; background: #0aaefc; margin: 8px 0 0 8px; }
.tip { position: absolute; left: 1795px; top: 68px; width: 116px; height: 45px; background: #fff; border: 1px solid #777; color: #000; text-align: right; font: 13px/18px "Noto Sans", sans-serif; padding: 2px 5px 0 3px; }
.tip div { height: 18px; padding-right: 1px; }
.tip hr { border: 0; border-top: 1px solid #888; margin: 0 -2px -1px 0; }
.tip svg { position: absolute; right: 4px; top: -8px; }
.cursor { position: absolute; left: 196px; top: 656px; }
</style>
